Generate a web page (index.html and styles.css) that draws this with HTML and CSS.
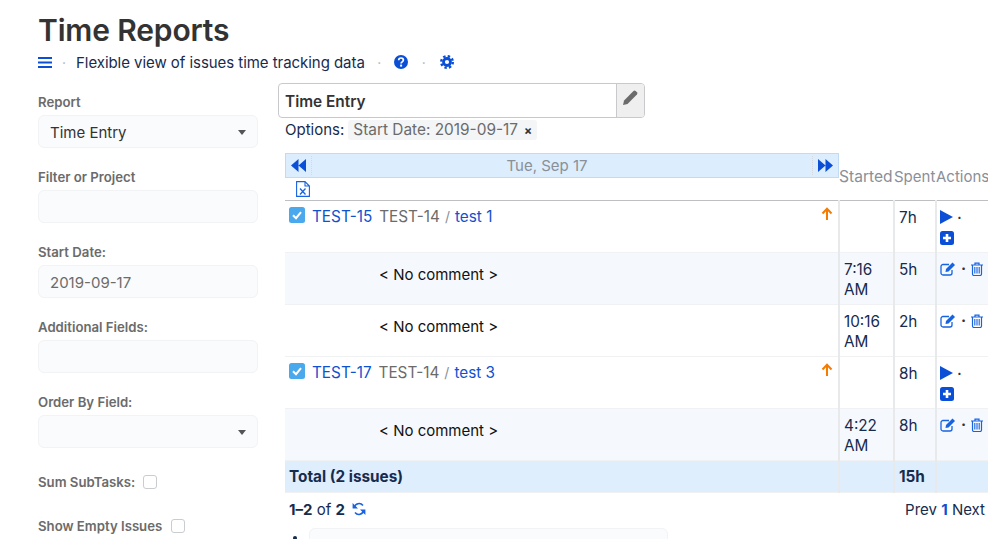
FILE: index.html
```html
<!DOCTYPE html>
<html lang="en">
<head>
<meta charset="utf-8">
<title>Time Reports</title>
<link rel="stylesheet" href="styles.css">
</head>
<body>
<svg class="defs" width="0" height="0" aria-hidden="true">
  <symbol id="up" viewBox="0 0 12 14"><path d="M6 13V2M1.500 6.500 6 1.800l4.500 4.700" fill="none" stroke="#f57c00" stroke-width="2"/></symbol>
  <symbol id="play" viewBox="0 0 13 14"><path d="M0 0l13 7-13 7z" fill="#0a4fd6"/></symbol>
  <symbol id="plus" viewBox="0 0 14 14"><rect width="14" height="14" rx="2.500" fill="#0a4fd6"/><path d="M7 3v8M3 7h8" stroke="#fff" stroke-width="2.600"/></symbol>
  <symbol id="edit" viewBox="0 0 16 14"><path d="M12 8v3a2 2 0 0 1-2 2H3a2 2 0 0 1-2-2V4.500a2 2 0 0 1 2-2h6" fill="none" stroke="#1763e0" stroke-width="1.300"/><path d="M6 7l6.500-6.500 2.500 2.500L8.500 9.500 5.500 10z" fill="#1763e0"/></symbol>
  <symbol id="trash" viewBox="0 0 12 14"><path d="M1.500 3.500v8.500a1.500 1.500 0 0 0 1.500 1.500h6a1.500 1.500 0 0 0 1.500-1.500V3.500M0 3h12M4 3V1.200h4V3" fill="none" stroke="#1763e0" stroke-width="1.200"/><path d="M3.800 5v6.500M6 5v6.500M8.200 5v6.500" stroke="#1763e0" stroke-width="1.100"/></symbol>
  <symbol id="check" viewBox="0 0 16 16"><rect width="16" height="16" rx="2.500" fill="#4aa8ec"/><path d="M4 8.300l3 2.900 5-6" fill="none" stroke="#fff" stroke-width="2"/></symbol>
</svg>

<header class="head">
  <h1 class="title">Time Reports</h1>
  <div class="sub">
    <svg class="i-menu" viewBox="0 0 14 11"><path d="M0 1h14M0 5.500h14M0 10h14" stroke="#0a4fd6" stroke-width="2"/></svg>
    <span class="dot d1">·</span>
    <span class="desc">Flexible view of issues time tracking data</span>
    <span class="dot d2">·</span>
    <svg class="i-help" viewBox="0 0 14 14"><circle cx="7" cy="7" r="7" fill="#0a4fd6"/><path d="M4.700 5.300c0-3 4.700-3 4.700-.2 0 1.800-2.300 1.700-2.300 3.400" fill="none" stroke="#fff" stroke-width="1.700"/><rect x="6.100" y="9.600" width="2" height="2" fill="#fff"/></svg>
    <span class="dot d3">·</span>
    <svg class="i-gear" viewBox="0 0 14 14"><circle cx="7" cy="7" r="3.500" fill="none" stroke="#0a4fd6" stroke-width="2.800"/><circle cx="7" cy="7" r="5.800" fill="none" stroke="#0a4fd6" stroke-width="2.400" stroke-dasharray="2.400 2.156"/></svg>
  </div>
</header>

<div class="layout">
  <aside class="side">
    <div class="field f-report">
      <label class="lab">Report</label>
      <div class="box">Time Entry<i class="caret"></i></div>
    </div>
    <div class="field">
      <label class="lab">Filter or Project</label>
      <div class="box"></div>
    </div>
    <div class="field">
      <label class="lab">Start Date:</label>
      <div class="box muted">2019-09-17</div>
    </div>
    <div class="field">
      <label class="lab">Additional Fields:</label>
      <div class="box"></div>
    </div>
    <div class="field">
      <label class="lab">Order By Field:</label>
      <div class="box"><i class="caret"></i></div>
    </div>
    <div class="chk c1"><span class="lab">Sum SubTasks:</span><i class="cb"></i></div>
    <div class="chk c2"><span class="lab">Show Empty Issues</span><i class="cb"></i></div>
  </aside>

  <main class="content">
    <div class="namebar">
      <div class="name">Time Entry</div>
      <div class="penbtn"><svg class="i-pen" viewBox="0 0 14 14"><path d="M0 14l1-4.200L9.800 1a1.500 1.500 0 0 1 2 0l1.200 1.200a1.500 1.500 0 0 1 0 2L4.200 13z" fill="#6b6b6b"/></svg></div>
    </div>
    <div class="options">Options:<span class="tag">Start Date: 2019-09-17<b class="x">×</b></span></div>

    <table class="grid">
      <colgroup><col class="c-main"><col class="c-start"><col class="c-spent"><col class="c-act"></colgroup>
      <thead>
        <tr class="h1row">
          <th class="th-nav">
            <div class="nav">
              <span class="navbtn nb-l"><svg class="i-tri" viewBox="0 0 14 12"><path d="M7 0v12L0 6zM14 0v12L7 6z" fill="#0a4fd6"/></svg></span>
              <span class="navdate">Tue, Sep 17</span>
              <span class="navbtn nb-r"><svg class="i-tri" viewBox="0 0 14 12"><path d="M0 0v12l7-6zM7 0v12l7-6z" fill="#0a4fd6"/></svg></span>
            </div>
            <div class="xls"><svg class="i-xls" viewBox="0 0 14 16"><path d="M.6.600h8.400l4.400 4.400v10.400H.6zM9 .6v4.400h4.400" fill="none" stroke="#1763e0" stroke-width="1.100"/><path d="M4 7.500l5.500 6M9.500 7.500l-5.500 6" stroke="#1763e0" stroke-width="1.300"/></svg></div>
          </th>
          <th class="th-col th-started"><span class="thtxt">Started</span></th>
          <th class="th-col"><span class="thtxt">Spent</span></th>
          <th class="th-col"><span class="thtxt">Actions</span></th>
        </tr>
      </thead>
      <tbody>
        <tr>
          <td class="issue"><div class="irow"><svg class="i-check"><use href="#check"/></svg><a class="key">TEST-15</a><span class="parent">TEST-14</span><span class="slash">/</span><a class="link">test 1</a><svg class="i-up"><use href="#up"/></svg></div></td>
          <td></td><td>7h</td>
          <td class="acts"><svg class="i-play"><use href="#play"/></svg><span class="sep">·</span><br><svg class="i-plus"><use href="#plus"/></svg></td>
        </tr>
        <tr class="sub-row">
          <td class="cm">&lt; No comment &gt;</td><td>7:16 AM</td><td>5h</td>
          <td class="acts"><svg class="i-edit"><use href="#edit"/></svg><span class="sep">·</span><svg class="i-trash"><use href="#trash"/></svg></td>
        </tr>
        <tr>
          <td class="cm">&lt; No comment &gt;</td><td>10:16 AM</td><td>2h</td>
          <td class="acts"><svg class="i-edit"><use href="#edit"/></svg><span class="sep">·</span><svg class="i-trash"><use href="#trash"/></svg></td>
        </tr>
        <tr>
          <td class="issue"><div class="irow"><svg class="i-check"><use href="#check"/></svg><a class="key">TEST-17</a><span class="parent">TEST-14</span><span class="slash">/</span><a class="link">test 3</a><svg class="i-up"><use href="#up"/></svg></div></td>
          <td></td><td>8h</td>
          <td class="acts"><svg class="i-play"><use href="#play"/></svg><span class="sep">·</span><br><svg class="i-plus"><use href="#plus"/></svg></td>
        </tr>
        <tr class="sub-row">
          <td class="cm">&lt; No comment &gt;</td><td>4:22 AM</td><td>8h</td>
          <td class="acts"><svg class="i-edit"><use href="#edit"/></svg><span class="sep">·</span><svg class="i-trash"><use href="#trash"/></svg></td>
        </tr>
        <tr class="total">
          <td>Total (2 issues)</td><td></td><td>15h</td><td></td>
        </tr>
      </tbody>
    </table>

    <div class="pager">
      <div><b>1–2</b> of <b>2</b> <svg class="i-refresh" viewBox="0 0 14 14"><path d="M2.200 5.500A5 5 0 0 1 11 3.500M11.800 8.500A5 5 0 0 1 3 10.500" fill="none" stroke="#1763e0" stroke-width="1.500"/><path d="M.6 1v5.500h5.400zM13.400 13V7.500H8z" fill="#1763e0"/></svg></div>
      <div class="pages">Prev <b class="cur">1</b> Next</div>
    </div>
    <div class="bottom"><b class="bdot"></b><div class="bbox"></div></div>
  </main>
</div>
</body>
</html>
```
FILE: styles.css
```css
html, body { margin: 0; padding: 0; height: 539px; overflow: hidden; background: #fff; }
body { font-family: Inter, "Liberation Sans", sans-serif; font-size: 15px; color: #172b4d; -webkit-font-smoothing: antialiased; }
.defs { position: absolute; }
svg { display: inline-block; }

.head { padding: 12px 0 0 38px; }
.title { margin: 0; font-size: 30px; line-height: 36px; font-weight: 600; color: #333; letter-spacing: -0.15px; }
.sub { display: flex; align-items: center; height: 20px; margin-top: 4px; }
.i-menu { width: 14px; height: 11px; }
.dot { color: #b0b4bb; text-align: center; font-size: 14px; }
.d1 { width: 24px; }
.d2 { width: 29px; }
.d3 { width: 32px; }
.desc { font-size: 15px; color: #172b4d; letter-spacing: -0.05px; }
.i-help, .i-gear { width: 14px; height: 14px; }

.layout { display: flex; padding: 11px 0 0 38px; }
.side { width: 220px; flex: none; }
.field { margin-bottom: 21px; }
.lab { display: block; font-size: 13.200px; line-height: 16px; font-weight: 600; color: #6b6b6b; margin-bottom: 5px; }
.f-report { padding-top: 11px; }
.box { position: relative; height: 31px; line-height: 33px; padding: 0 11px; background: #fafbfc; border: 1px solid #f2f3f5; border-radius: 6px; color: #333; font-size: 15px; }
.box.muted { color: #6b6b6b; }
.caret { position: absolute; right: 11px; top: 14px; width: 0; height: 0; border: 4px solid transparent; border-top: 5px solid #555; border-bottom: 0; }
.chk { display: flex; align-items: center; }
.chk .lab { margin: 0; }
.cb { width: 12px; height: 12px; border: 1px solid #c9ccd1; border-radius: 3px; margin-left: 8px; background: #fff; }
.c1 { margin-top: 26px; }
.c2 { margin-top: 28px; }
.c2 .cb { margin-left: 9px; }

.content { margin-left: 20px; width: 720px; flex: none; }
.namebar { display: flex; width: 365px; height: 33px; border: 1px solid #c8c9cc; border-radius: 4px; }
.name { flex: 1; font-size: 15.400px; font-weight: 600; color: #333; line-height: 35px; padding-left: 6px; }
.penbtn { width: 27px; background: #efefef; border-left: 1px solid #c8c9cc; border-radius: 0 3px 3px 0; display: flex; align-items: center; justify-content: center; }
.i-pen { width: 15px; height: 15px; margin-top: -7px; }
.options { margin-left: 7px; margin-top: 2px; height: 20px; line-height: 20px; font-size: 15px; display: flex; }
.tag { margin-left: 4px; padding: 0 5px; background: #f4f5f7; color: #6b6b6b; border-radius: 3px; font-size: 15.400px; }
.x { margin-left: 6px; color: #333; font-size: 12px; }

.grid { margin: 13px 0 0 7px; width: 703px; border-collapse: collapse; table-layout: fixed; font-size: 15.300px; }
.c-main { width: 554px; }
.c-start { width: 55px; }
.c-spent { width: 42px; }
.c-act { width: 52px; }
.h1row { height: 45px; border-bottom: 1px solid #bdbfc3; }
.h1row th { padding: 0; font-weight: 400; }
.th-nav { vertical-align: top; }
.nav { display: flex; align-items: center; height: 23px; background: #dcedfd; border: 1px solid #c3daf3; }
.navbtn { display: flex; align-items: center; height: 19px; width: 20px; }
.nb-l { justify-content: flex-start; padding-left: 5px; border-right: 1px dotted #d5d8dc; }
.nb-r { justify-content: flex-end; padding-right: 5px; border-left: 1px dotted #d5d8dc; }
.navdate { flex: 1; text-align: center; color: #8a8f98; font-size: 15px; padding-right: 30px; }
.i-tri { width: 15px; height: 13px; flex: none; }
.xls { height: 22px; text-align: left; padding: 3px 0 0 11px; box-sizing: border-box; }
.i-xls { width: 14px; height: 16px; display: block; }
.th-col { vertical-align: top; text-align: left; overflow: hidden; white-space: nowrap; color: #8a8f98; font-size: 15px; }
.th-started { font-size: 15.600px; }
.thtxt { display: block; padding-top: 15px; line-height: 18px; }

.grid tbody tr { height: 52px; border-bottom: 1px solid #f0f1f3; }
.grid tbody td { vertical-align: top; padding: 7px 4px 0 4px; line-height: 20px; border-left: 2px solid #e8e9eb; box-sizing: border-box; color: #172b4d; }
.grid tbody td:first-child { border-left: 0; }
.sub-row { background: #f5f9fe; }
.grid tbody .cm { text-align: left; padding: 12px 0 0 94px; color: #111; font-size: 15px; }
.irow { display: flex; align-items: center; height: 20px; margin-top: -1px; }
.i-check { width: 16px; height: 16px; margin-right: 7px; margin-top: -4px; }
.key, .link { color: #0f52d0; }
.parent { color: #6b6b6b; margin-left: 7px; }
.slash { color: #8a8f98; margin: 0 5px; font-size: 14px; }
.i-up { width: 12px; height: 14px; margin-left: auto; margin-right: 1px; margin-top: -6px; }
.grid tbody .acts { white-space: nowrap; padding: 6px 0 0 3px; }
.i-play { width: 13px; height: 14px; vertical-align: -2px; }
.i-plus { width: 14px; height: 14px; vertical-align: -3px; }
.i-edit { width: 16px; height: 14px; vertical-align: -2px; }
.i-trash { width: 12px; height: 14px; vertical-align: -2px; }
.sep { display: inline-block; width: 15px; text-align: center; font-weight: 700; color: #333; }
.i-play + .sep { width: 13px; font-size: 13px; }
.grid tbody .total { height: 32px; background: #deeefc; font-weight: 700; }
.grid tbody .total td { vertical-align: middle; padding-top: 1px; }

.pager { display: flex; justify-content: space-between; margin-left: 11px; width: 696px; margin-top: 7px; height: 20px; line-height: 20px; }
.i-refresh { width: 14px; height: 14px; vertical-align: -1px; margin-left: 3px; }
.cur { color: #0f52d0; }
.bottom { display: flex; margin: 8px 0 0 15px; }
.bdot { width: 4px; height: 4px; margin-top: 8px; background: #172b4d; border-radius: 50%; }
.bbox { margin-left: 12px; width: 357px; height: 30px; background: #fafbfc; border: 1px solid #f2f3f5; border-radius: 6px; }
```
